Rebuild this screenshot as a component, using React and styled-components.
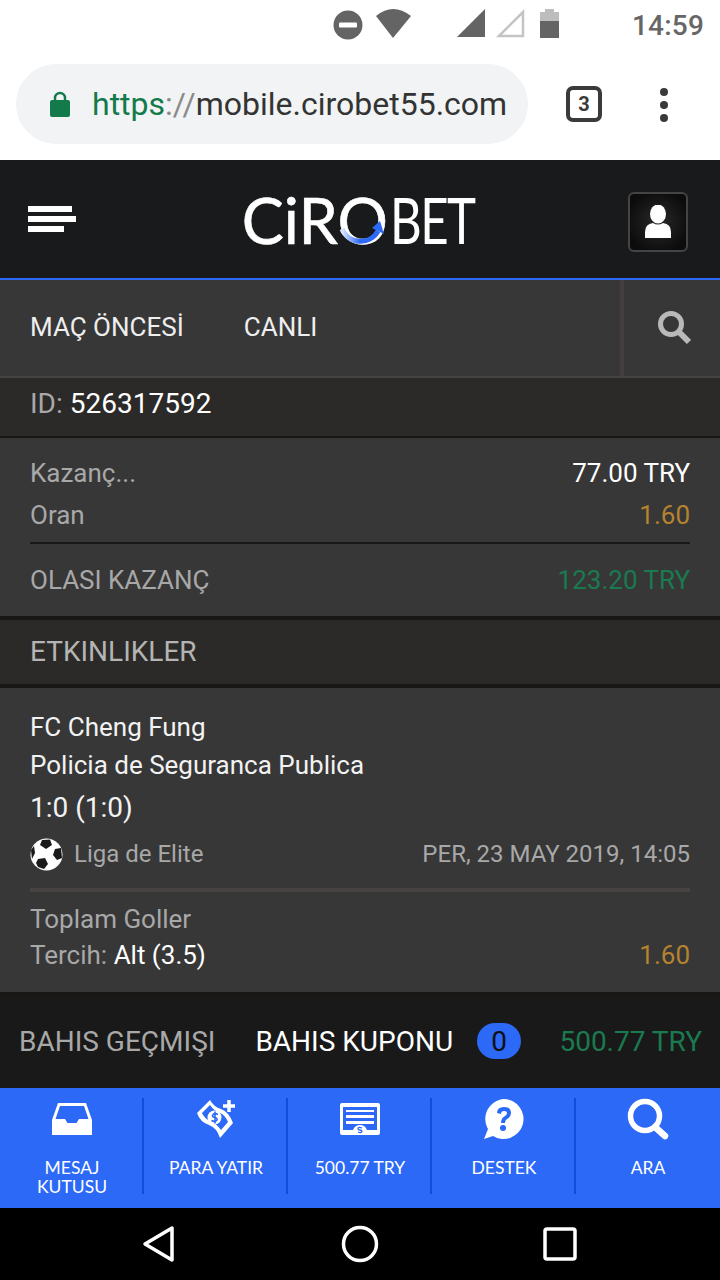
import styled, { createGlobalStyle } from 'styled-components'

const GlobalStyle = createGlobalStyle`
    html, body {
        margin: 0;
        padding: 0;
        background: #fff;
        font-family: Roboto, "Liberation Sans", sans-serif;
    }
    * {
        box-sizing: border-box;
    }
`

const Page = styled.div`
    width: 720px;
    height: 1280px;
    overflow: hidden;
    display: flex;
    flex-direction: column;
    background: #191616;
`

const StatusBar = styled.div`
    height: 50px;
    background: #fff;
    display: flex;
    align-items: center;
    padding: 0 16px 0 331px;
    color: #646464;
`

const StatusIcons = styled.svg`
    width: 240px;
    height: 50px;
    flex: none;
`

const Clock = styled.div`
    margin-left: auto;
    font-size: 28px;
    font-weight: 500;
    letter-spacing: 0.2px;
    color: #666;
`

const Toolbar = styled.div`
    height: 110px;
    background: #fff;
    display: flex;
    align-items: flex-start;
    padding: 14px 0 0 16px;
`

const UrlBox = styled.div`
    width: 512px;
    height: 80px;
    border-radius: 40px;
    background: #f1f3f4;
    display: flex;
    align-items: center;
    padding-left: 34px;
    overflow: hidden;
`

const Lock = styled.svg`
    width: 20px;
    height: 26px;
    flex: none;
    margin-right: 22px;
`

const UrlText = styled.div`
    font-size: 32px;
    color: #333;
    white-space: nowrap;
`

const Https = styled.span`
    color: #137a4b;
`

const Slashes = styled.span`
    color: #8a8a8a;
`

const TabCount = styled.div`
    width: 36px;
    height: 36px;
    margin: 22px 0 0 38px;
    border: 4px solid #3a3a3a;
    border-radius: 7px;
    display: flex;
    align-items: center;
    justify-content: center;
    font-size: 20px;
    font-weight: 700;
    color: #3a3a3a;
`

const Dots = styled.div`
    margin: 24px 0 0 58px;
    display: flex;
    flex-direction: column;
    gap: 5px;
`

const Dot = styled.span`
    width: 8px;
    height: 8px;
    border-radius: 50%;
    background: #3a3a3a;
`

const Header = styled.header`
    height: 120px;
    background: #191a1b;
    border-bottom: 2px solid #2b69f6;
    display: flex;
    align-items: center;
    justify-content: space-between;
    padding: 0 32px 0 28px;
`

const Burger = styled.div`
    display: flex;
    flex-direction: column;
    gap: 4px;
`

const BurgerBar = styled.span`
    display: block;
    height: 6px;
    width: ${({ $w }) => $w}px;
    background: #fff;
`

const Logo = styled.div`
    display: flex;
    align-items: center;
    position: relative;
    color: #fff;
    font-family: Lato, sans-serif;
    font-size: 63px;
    line-height: 1;
    margin-left: 16px;
    -webkit-text-stroke: 0.6px #fff;
`

const LogoThin = styled.span`
    display: inline-block;
    font-weight: 400;
    letter-spacing: -2px;
    transform: scaleX(0.78);
    transform-origin: left center;
    margin: 0 -20px 0 2px;
    -webkit-text-stroke: 0;
`

const LogoArc = styled.svg`
    position: absolute;
    left: 92px;
    top: 24px;
    width: 52px;
    height: 40px;
`

const UserButton = styled.div`
    width: 60px;
    height: 60px;
    margin-top: 6px;
    border: 2px solid #444;
    border-radius: 6px;
    background: radial-gradient(circle, #2a2a2a 0%, #0c0c0c 80%);
    display: flex;
    align-items: center;
    justify-content: center;
`

const Nav = styled.nav`
    height: 98px;
    background: #373737;
    border-bottom: 2px solid #454343;
    display: flex;
    align-items: center;
    padding-left: 30px;
    gap: 60px;
    color: #eee;
    font-size: 26px;
`

const NavLink = styled.span`
    padding-bottom: 2px;
`

const SearchCell = styled.div`
    margin-left: auto;
    width: 100px;
    height: 96px;
    border-left: 4px solid #433f3f;
    display: flex;
    align-items: center;
    justify-content: center;
    padding-left: 6px;
`

const IdRow = styled.div`
    height: 58px;
    background: #2b2a28;
    display: flex;
    align-items: center;
    padding: 0 30px 8px;
    font-size: 28px;
    color: #a8a8a8;
`

const White = styled.span`
    color: #fff;
    margin-left: ${({ $gap }) => $gap || 0}px;
`

const Summary = styled.section`
    height: 178px;
    margin-top: 2px;
    background: #373737;
    padding: 14px 30px 0;
`

const Row = styled.div`
    display: flex;
    justify-content: space-between;
    align-items: center;
    height: ${({ $h }) => $h}px;
    font-size: 26px;
    color: #a8a8a8;
`

const Value = styled.span`
    color: ${({ $color }) => $color};
`

const SolidLine = styled.div`
    height: 2px;
    margin-top: 6px;
    background: #191818;
`

const SectionTitle = styled.div`
    height: 64px;
    margin-top: 4px;
    padding: 0 30px 2px;
    background: #2b2a28;
    display: flex;
    align-items: center;
    font-size: 28px;
    color: #b4b4b4;
`

const EventCard = styled.section`
    height: 304px;
    background: #373737;
    padding: 20px 30px 0;
    margin-top: 4px;
`

const EventLine = styled.div`
    height: ${({ $h }) => $h}px;
    display: flex;
    align-items: center;
    font-size: ${({ $size }) => $size || 26}px;
    color: #f2f2f2;
`

const League = styled.div`
    height: 44px;
    margin-top: 2px;
    display: flex;
    align-items: center;
    font-size: 24px;
    color: #a8a8a8;
`

const LeagueName = styled.span`
    margin-left: 11px;
`

const LeagueDate = styled.span`
    margin-left: auto;
`

const DottedLine = styled.div`
    height: 4px;
    margin: 12px 0 9px;
    background: #484343;
`

const Footer = styled.div`
    height: 92px;
    margin-top: 4px;
    background: #191919;
    display: flex;
    align-items: center;
    padding: 0 18px 2px 19px;
    font-size: 28px;
    color: #a8a8a8;
    white-space: nowrap;
`

const CouponLabel = styled.span`
    color: #fff;
    margin-left: 40px;
`

const CouponBadge = styled.span`
    width: 44px;
    height: 36px;
    margin-left: 24px;
    border-radius: 18px;
    background: #2b69f6;
    color: #101010;
    display: flex;
    align-items: center;
    justify-content: center;
    font-size: 28px;
`

const Balance = styled.span`
    margin-left: auto;
    color: #1a7a50;
`

const Tabs = styled.div`
    height: 120px;
    background: #2b69f6;
    display: grid;
    grid-template-columns: repeat(5, 144px);
    padding-top: 10px;
`

const Tab = styled.div`
    height: 96px;
    display: flex;
    flex-direction: column;
    align-items: center;
    color: #fff;
    font-family: Lato, sans-serif;
    font-size: 17.5px;
    line-height: 19px;
    text-align: center;
    border-left: ${({ $last }) => ($last ? 'none' : '2px solid transparent')};
    border-right: ${({ $last }) => ($last ? 'none' : '2px solid #0e4fd6')};
`

const TabIcon = styled.svg`
    width: 48px;
    height: 48px;
    flex: none;
`

const TabLabel = styled.div`
    margin-top: 12px;
`

const AndroidNav = styled.div`
    height: 72px;
    background: #000;
    display: grid;
    grid-template-columns: repeat(3, 200px);
    justify-content: center;
    align-items: center;
    justify-items: center;
`

const NavIcon = styled.svg`
    width: 40px;
    height: 40px;
`

const BallIcon = () => (
    <svg width="33" height="33" viewBox="0 0 33 33">
        <circle cx="16.5" cy="16.5" r="16" fill="#fff" />
        <path d="M12 2 L20 1.5 L22 7 L16 11 L10 7 Z" fill="#1a1a1a" />
        <path d="M25 11 L31 10 L32 20 L27 22 L23 17 Z" fill="#1a1a1a" />
        <path d="M8 21 L15 20 L18 26 L14 31 L8 29 L6 25 Z" fill="#1a1a1a" />
        <path d="M1 12 L4 8 L5 15 L2 21 Z" fill="#1a1a1a" />
    </svg>
)

const App = () => {
    return (
        <Page>
            <GlobalStyle />
            <StatusBar>
                <StatusIcons viewBox="0 0 240 50">
                    <circle cx="17" cy="25" r="14.5" fill="#646464" />
                    <rect x="8" y="22.5" width="18" height="5" rx="1" fill="#fff" />
                    <path d="M45 16 Q62 2 80 16 L62 38 Z" fill="#646464" />
                    <path d="M126 37 L154 9 V37 Z" fill="#646464" />
                    <path d="M168 36 L192 12 V36 Z" fill="none" stroke="#c4c4c4" strokeWidth="2.5" />
                    <rect x="209" y="12" width="19" height="26" fill="#bdbdbd" />
                    <rect x="214" y="9" width="9" height="3" fill="#bdbdbd" />
                    <rect x="209" y="21" width="19" height="17" fill="#646464" />
                </StatusIcons>
                <Clock>14:59</Clock>
            </StatusBar>
            <Toolbar>
                <UrlBox>
                    <Lock viewBox="0 0 20 26">
                        <path d="M5 11 V7 a5 5 0 0 1 10 0 V11" fill="none" stroke="#137a4b" strokeWidth="2.5" />
                        <rect y="9" width="20" height="17" rx="2" fill="#137a4b" />
                    </Lock>
                    <UrlText>
                        <Https>https</Https>
                        <Slashes>://</Slashes>mobile.cirobet55.com
                    </UrlText>
                </UrlBox>
                <TabCount>3</TabCount>
                <Dots>
                    <Dot />
                    <Dot />
                    <Dot />
                </Dots>
            </Toolbar>
            <Header>
                <Burger>
                    <BurgerBar $w={44} />
                    <BurgerBar $w={48} />
                    <BurgerBar $w={36} />
                </Burger>
                <Logo>
                    CiRO<LogoThin>BET</LogoThin>
                    <LogoArc viewBox="0 0 52 40">
                        <defs>
                            <linearGradient id="arcFade" x1="0" x2="1" y1="0" y2="0">
                                <stop offset="0" stopColor="#dfe8ff" />
                                <stop offset="0.5" stopColor="#2b69f6" />
                            </linearGradient>
                        </defs>
                        <path d="M8 17 A20 20 0 0 0 44 19" fill="none" stroke="url(#arcFade)" strokeWidth="5" />
                        <path d="M38 16 L46 9 L50 22 Z" fill="#2b69f6" />
                    </LogoArc>
                </Logo>
                <UserButton>
                    <svg width="26" height="34" viewBox="0 0 26 34">
                        <ellipse cx="13" cy="9" rx="8" ry="9.5" fill="#fff" />
                        <path d="M0 33 V27 Q0 19 8 18 Q13 21 18 18 Q26 19 26 27 V33 Z" fill="#fff" />
                    </svg>
                </UserButton>
            </Header>
            <Nav>
                <NavLink>MAÇ ÖNCESİ</NavLink>
                <NavLink>CANLI</NavLink>
                <SearchCell>
                    <svg width="36" height="36" viewBox="0 0 36 36">
                        <circle cx="14" cy="14" r="10.5" fill="none" stroke="#b9b9b9" strokeWidth="5" />
                        <path d="M21 21 L32 32" stroke="#b9b9b9" strokeWidth="6" />
                    </svg>
                </SearchCell>
            </Nav>
            <IdRow>
                ID:<White $gap={7}>526317592</White>
            </IdRow>
            <Summary>
                <Row $h={42}>
                    <span>Kazanç...</span>
                    <White>77.00 TRY</White>
                </Row>
                <Row $h={42}>
                    <span>Oran</span>
                    <Value $color="#b5832f">1.60</Value>
                </Row>
                <SolidLine />
                <Row $h={72}>
                    <span>OLASI KAZANÇ</span>
                    <Value $color="#1a7a50">123.20 TRY</Value>
                </Row>
            </Summary>
            <SectionTitle>ETKINLIKLER</SectionTitle>
            <EventCard>
                <EventLine $h={38}>FC Cheng Fung</EventLine>
                <EventLine $h={38}>Policia de Seguranca Publica</EventLine>
                <EventLine $h={46} $size={28}>1:0 (1:0)</EventLine>
                <League>
                    <BallIcon />
                    <LeagueName>Liga de Elite</LeagueName>
                    <LeagueDate>PER, 23 MAY 2019, 14:05</LeagueDate>
                </League>
                <DottedLine />
                <Row $h={36}>
                    <span>Toplam Goller</span>
                </Row>
                <Row $h={36}>
                    <span>
                        Tercih: <White>Alt (3.5)</White>
                    </span>
                    <Value $color="#b5832f">1.60</Value>
                </Row>
            </EventCard>
            <Footer>
                <span>BAHIS GEÇMIŞI</span>
                <CouponLabel>BAHIS KUPONU</CouponLabel>
                <CouponBadge>0</CouponBadge>
                <Balance>500.77 TRY</Balance>
            </Footer>
            <Tabs>
                <Tab>
                    <TabIcon viewBox="0 0 48 48">
                        <path d="M10 5 H38 L44 22 V37 H4 V22 Z" fill="#fff" />
                        <path d="M12 8 H36 L40.5 21 H31 L28.5 25 H19.5 L17 21 H7.5 Z" fill="#2b69f6" />
                    </TabIcon>
                    <TabLabel>MESAJ<br />KUTUSU</TabLabel>
                </Tab>
                <Tab>
                    <TabIcon viewBox="0 0 48 48">
                        <path d="M5 15 L18 2 Q22 9 29 11 Q37 14 41 25 L28 40 Q25 30 17 27 Q8 24 5 15 Z" fill="#fff" />
                        <path d="M10 15 L18 7 Q22 13 28 15 Q33 17 36 24 L29 32 Q25 26 18 23 Q12 20 10 15 Z" fill="#2b69f6" />
                        <circle cx="22.5" cy="19.5" r="7" fill="#fff" />
                        <path d="M26 16.5 Q22 14.5 20.5 17.5 Q20.5 19.5 23 19.5 Q25.5 20 25 22 Q23 24.5 19.5 22.5 M23 13.5 V25.5" fill="none" stroke="#2b69f6" strokeWidth="1.6" />
                        <path d="M31 8 H43 M37 2 V14" stroke="#fff" strokeWidth="3.5" />
                    </TabIcon>
                    <TabLabel>PARA YATIR</TabLabel>
                </Tab>
                <Tab>
                    <TabIcon viewBox="0 0 48 48">
                        <rect x="4" y="5" width="40" height="32" rx="2" fill="#fff" />
                        <path d="M7 9 H41 V32 H31 Q29 27 24 27 Q19 27 17 32 H7 Z" fill="#2b69f6" />
                        <path d="M10 12 H38 V14 H10 Z M10 17 H38 V20 H10 Z M10 23 H38 V26 H10 Z" fill="#fff" />
                        <circle cx="24" cy="32" r="4.5" fill="#fff" />
                        <path d="M26 30 Q22 28.5 22 31 Q22 32 24 32 Q26 32.5 26 33.5 Q25 35.5 22 34" fill="none" stroke="#2b69f6" strokeWidth="1.3" />
                    </TabIcon>
                    <TabLabel>500.77 TRY</TabLabel>
                </Tab>
                <Tab>
                    <TabIcon viewBox="0 0 48 48">
                        <path d="M24 1 A20 20 0 1 1 13 38 L4 41 L8 31 A20 20 0 0 1 24 1 Z" fill="#fff" />
                        <path d="M17 15 Q17 9 24 9 Q31 9 31 15 Q31 19 27 21 Q25 22 25 25 H21 Q21 20 25 18 Q27 17 27 15 Q27 13 24 13 Q21 13 21 16 Z" fill="#2b69f6" />
                        <circle cx="23" cy="30" r="3" fill="#2b69f6" />
                    </TabIcon>
                    <TabLabel>DESTEK</TabLabel>
                </Tab>
                <Tab $last>
                    <TabIcon viewBox="0 0 48 48">
                        <circle cx="21" cy="18" r="14.5" fill="none" stroke="#fff" strokeWidth="5.5" />
                        <path d="M31 29 L41 38" stroke="#fff" strokeWidth="6.5" strokeLinecap="round" />
                    </TabIcon>
                    <TabLabel>ARA</TabLabel>
                </Tab>
            </Tabs>
            <AndroidNav>
                <NavIcon viewBox="0 0 40 40">
                    <path d="M32 4 V36 L5 20 Z" fill="none" stroke="#fff" strokeWidth="3.5" strokeLinejoin="round" />
                </NavIcon>
                <NavIcon viewBox="0 0 40 40">
                    <circle cx="20" cy="20" r="16.5" fill="none" stroke="#fff" strokeWidth="3.5" />
                </NavIcon>
                <NavIcon viewBox="0 0 40 40">
                    <rect x="5" y="5" width="30" height="30" rx="2" fill="none" stroke="#fff" strokeWidth="3.5" />
                </NavIcon>
            </AndroidNav>
        </Page>
    )
}

export default App
